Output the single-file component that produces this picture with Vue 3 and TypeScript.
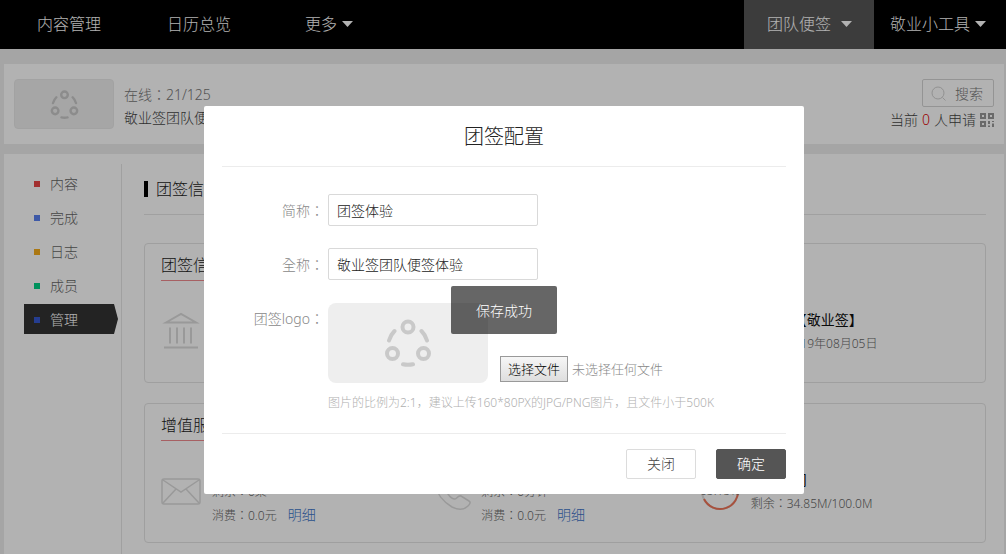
<script setup lang="ts">
import { ref } from 'vue'

interface SideItem {
  label: string
  tone: string
}

const sideItems: SideItem[] = [
  { label: '内容', tone: 'red' },
  { label: '完成', tone: 'blue' },
  { label: '日志', tone: 'amber' },
  { label: '成员', tone: 'green' },
  { label: '管理', tone: 'navy' },
]
const activeItem = ref('管理')
const shortName = ref('团签体验')
const fullName = ref('敬业签团队便签体验')
const fileName = ref('未选择任何文件')
const fileInput = ref<HTMLInputElement | null>(null)
const dialogOpen = ref(true)

function onFile(event: Event) {
  const file = (event.target as HTMLInputElement).files?.[0]
  fileName.value = file ? file.name : '未选择任何文件'
}
</script>

<template>
  <div class="page">
    <nav class="topbar">
      <a class="nav-link" href="#">内容管理</a>
      <a class="nav-link" href="#">日历总览</a>
      <a class="nav-link" href="#">更多
        <svg class="caret" viewBox="0 0 11 6"><path d="M0 0h11L5.500 6z" /></svg>
      </a>
      <span class="spacer"></span>
      <a class="nav-tab current" href="#">团队便签
        <svg class="caret wide" viewBox="0 0 11 6"><path d="M0 0h11L5.500 6z" /></svg>
      </a>
      <a class="nav-tab" href="#">敬业小工具
        <svg class="caret" viewBox="0 0 11 6"><path d="M0 0h11L5.500 6z" /></svg>
      </a>
    </nav>

    <header class="team panel">
      <div class="team-logo">
        <svg viewBox="0 0 48 48" class="share-icon">
          <circle cx="24" cy="8" r="5.500" /><circle cx="8.500" cy="34.500" r="5.500" /><circle cx="39.500" cy="34.500" r="5.500" />
          <path d="M10.500 12Q6.500 16 5 21.500M37.500 12Q41.500 16 43 21.500M19 45.300Q24 46.300 29 45.300" />
        </svg>
      </div>
      <div class="team-info">
        <p class="online">在线：21/125</p>
        <p class="team-name">敬业签团队便签体验</p>
      </div>
      <div class="team-tools">
        <button class="search" type="button">
          <svg viewBox="0 0 16 16"><circle cx="7" cy="7" r="6" /><path d="M11.500 11.500l3 3" /></svg>搜索
        </button>
        <p class="apply">当前 <em>0</em> 人申请
          <svg viewBox="0 0 14 14">
            <path d="M1 1h4v4H1zM9 1h4v4H9zM1 9h4v4H1z" />
            <path d="M9 8v3M13 8v1M9 12.500v1.500M13 10.500V14" />
          </svg>
        </p>
      </div>
    </header>

    <main class="main panel">
      <aside class="side">
        <a
          v-for="item in sideItems"
          :key="item.label"
          href="#"
          :class="['side-link', item.tone, { active: item.label === activeItem }]"
          @click.prevent="activeItem = item.label"
        >{{ item.label }}</a>
      </aside>
      <div class="content">
        <h1 class="section-title">团签信息</h1>
        <section class="card">
          <h2>团签信息</h2>
          <div class="columns">
            <div class="cell">
              <svg class="cell-icon" viewBox="0 0 40 40">
                <path class="roof" d="M5 11.500L20 3l15 8.500z" />
                <path class="pillars" d="M9 16.500v16M16 16.500v16M23 16.500v16M30 16.500v16" />
                <path class="base" d="M3 36.500h34" />
              </svg>
            </div>
            <div class="cell"></div>
            <div class="cell">
              <span class="cell-icon"></span>
              <div class="cell-text">
                <p class="strong">名称：【敬业签】</p>
                <p>创建：2019年08月05日</p>
              </div>
            </div>
          </div>
        </section>
        <section class="card">
          <h2>增值服务</h2>
          <div class="columns">
            <div class="cell">
              <svg class="cell-icon line" viewBox="0 0 40 40">
                <rect x="1" y="8" width="38" height="25" rx="2" />
                <path d="M2 9l18 12L38 9M2 32l13-14M38 32L25 18" />
              </svg>
              <div class="cell-text">
                <p class="strong">短信</p>
                <p>剩余：0条</p>
                <p>消费：0.0元 <a href="#">明细</a></p>
              </div>
            </div>
            <div class="cell">
              <svg class="cell-icon line" viewBox="0 0 40 40">
                <path d="M12 4l6 8c1 2 0 3-2 5-1 1 0 3 2 6s5 5 7 5 3-4 6-3l8 5c2 1 1 3-1 5-4 4-10 4-16 1C14 31 7 24 6 15 5 9 8 5 10 3z" />
              </svg>
              <div class="cell-text">
                <p class="strong">电话</p>
                <p>剩余：0分钟</p>
                <p>消费：0.0元 <a href="#">明细</a></p>
              </div>
            </div>
            <div class="cell">
              <svg class="cell-icon gauge" viewBox="0 0 40 40">
                <circle class="track" cx="20" cy="20" r="18" />
                <path class="value" d="M20 2A18 18 0 1 1 4 28" />
                <text x="20" y="24">65.15%</text>
              </svg>
              <div class="cell-text">
                <p class="strong">存储空间</p>
                <p>剩余：34.85M/100.0M</p>
              </div>
            </div>
          </div>
        </section>
      </div>
    </main>

    <div v-if="dialogOpen" class="overlay">
      <form class="dialog" role="dialog" aria-labelledby="dialog-title" @submit.prevent>
        <h2 id="dialog-title">团签配置</h2>
        <div class="fields">
          <div class="row">
            <label for="short">简称：</label>
            <input id="short" v-model="shortName" type="text" />
          </div>
          <div class="row">
            <label for="full">全称：</label>
            <input id="full" v-model="fullName" type="text" />
          </div>
          <div class="row logo-row">
            <label for="logo">团签logo：</label>
            <div>
              <div class="upload">
                <div class="preview">
                  <svg viewBox="0 0 48 48" class="share-icon">
                    <circle cx="24" cy="8" r="5.500" /><circle cx="8.500" cy="34.500" r="5.500" /><circle cx="39.500" cy="34.500" r="5.500" />
                    <path d="M10.500 12Q6.500 16 5 21.500M37.500 12Q41.500 16 43 21.500M19 45.300Q24 46.300 29 45.300" />
                  </svg>
                </div>
                <input id="logo" ref="fileInput" class="file" type="file" accept="image/png,image/jpeg" @change="onFile" />
                <button class="pick" type="button" @click="fileInput?.click()">选择文件</button>
                <span class="file-name">{{ fileName }}</span>
              </div>
              <p class="hint">图片的比例为2:1，建议上传160*80PX的JPG/PNG图片，且文件小于500K</p>
            </div>
          </div>
        </div>
        <footer>
          <button class="btn" type="button" @click="dialogOpen = false">关闭</button>
          <button class="btn primary" type="submit">确定</button>
        </footer>
        <div class="toast" role="status">保存成功</div>
      </form>
    </div>
  </div>
</template>

<style>
body {
  background: #ececec;
  overflow: hidden;
}
</style>

<style scoped>
.page {
  font: 300 14px/20px "Noto Sans", "Noto Sans CJK TC", "Noto Sans CJK SC", sans-serif;
  color: #444;
  text-spacing-trim: space-all;
}
.page *,
.page *::before {
  box-sizing: border-box;
}
p, h1, h2 {
  margin: 0;
  font-weight: 300;
}
a {
  text-decoration: none;
}
button, input {
  font: inherit;
}
svg {
  fill: none;
  stroke: currentColor;
}

.topbar {
  display: flex;
  height: 49px;
  padding-left: 37px;
  background: #000;
  font-size: 16px;
}
.topbar a {
  display: flex;
  align-items: center;
  gap: 5px;
  padding-bottom: 1px;
  color: #fff;
}
.nav-link {
  margin-right: 66px;
}
.nav-link + .nav-link + .nav-link {
  margin-left: 8px;
}
.spacer {
  flex: 1;
}
.topbar .nav-tab {
  padding: 0 20px 1px 16px;
}
.topbar .nav-tab.current {
  padding: 0 22px 1px 23px;
  background: #575757;
}
.caret {
  width: 11px;
  height: 6px;
  fill: #fff;
  stroke: none;
}
.caret.wide {
  margin-left: 5px;
}

.panel {
  margin: 0 2px 0 4px;
  background: #fff;
}
.team {
  display: flex;
  height: 80px;
  margin-top: 15px;
  padding: 15px 10px 0;
}
.team-logo {
  display: flex;
  align-items: center;
  justify-content: center;
  width: 100px;
  height: 50px;
  border: 1px solid #e9e9e9;
  border-radius: 4px;
  background: #eee;
}
.share-icon {
  width: 48px;
  height: 48px;
  color: #c9c9c9;
  stroke-width: 4;
  stroke-linecap: round;
}
.team-logo .share-icon {
  width: 29px;
  height: 29px;
}
.team-info {
  flex: 1;
  padding: 6px 10px 0;
}
.online {
  margin-bottom: 3px;
  color: #777;
}
.team-tools {
  display: flex;
  flex-direction: column;
  align-items: flex-end;
}
.search {
  display: flex;
  align-items: center;
  gap: 8px;
  width: 72px;
  height: 28px;
  padding: 1px 8px 0;
  border: 1px solid #d5d5d5;
  border-radius: 2px;
  background: transparent;
  color: #777;
  white-space: nowrap;
}
.search svg {
  flex: none;
  width: 16px;
  height: 16px;
  color: #d0d0d0;
}
.apply {
  display: flex;
  align-items: center;
  gap: 4px;
  margin-top: 3px;
}
.apply em {
  color: #d00;
  font-style: normal;
}
.apply svg {
  width: 14px;
  height: 14px;
  color: #999;
  stroke-width: 2;
}

.main {
  display: flex;
  min-height: calc(100vh - 154px);
  margin-top: 10px;
  padding: 10px 18px 0 20px;
}
.side {
  display: flex;
  flex-direction: column;
  gap: 4px;
  width: 98px;
  padding-top: 4px;
  border-right: 1px solid #e6e6e6;
}
.side-link {
  display: flex;
  align-items: center;
  gap: 10px;
  width: 94px;
  height: 30px;
  padding: 2px 0 0 10px;
  color: #666;
}
.side-link::before {
  content: "";
  width: 6px;
  height: 6px;
  background: currentColor;
}
.side-link.red::before { background: #e84545; }
.side-link.blue::before { background: #5a80f0; }
.side-link.amber::before { background: #f5ad1c; }
.side-link.green::before { background: #00d084; }
.side-link.navy::before { background: #3558cf; }
.side-link.active {
  background: #333;
  color: #fff;
  clip-path: polygon(0 0, 90px 0, 100% 50%, 90px 100%, 0 100%);
}
.content {
  flex: 1;
  padding: 0 0 11px 22px;
}
.section-title {
  display: flex;
  align-items: center;
  gap: 8px;
  height: 51px;
  border-bottom: 1px solid #e6e6e6;
  color: #222;
  font-size: 16px;
}
.section-title::before {
  content: "";
  width: 4px;
  height: 16px;
  background: #000;
}
.card {
  height: 140px;
  margin-top: 20px;
  padding: 9px 16px 0;
  border: 1px solid #e4e4e4;
  border-radius: 4px;
}
.section-title + .card {
  margin-top: 28px;
}
.card h2 {
  width: 64px;
  height: 28px;
  border-bottom: 1px solid #f08a8f;
  color: #222;
  font-size: 16px;
  line-height: 24px;
}
.columns {
  display: grid;
  grid-template-columns: repeat(3, 1fr);
  height: 100px;
}
.cell {
  display: flex;
  align-items: center;
  gap: 11px;
}
.cell-icon {
  flex: none;
  width: 40px;
  height: 40px;
  overflow: visible;
  color: #dcdcdc;
  stroke-width: 2;
}
.line {
  stroke-width: 1.500;
}
.cell-text {
  padding-top: 2px;
  color: #666;
  font-size: 12px;
  line-height: 24px;
}
.strong {
  color: #111;
  font-size: 14px;
  font-weight: 400;
}
.cell-text a {
  margin-left: 8px;
  color: #3c74c8;
  font-size: 14px;
  line-height: 20px;
}
.track { color: #e0e0e0; }
.value { color: #f07458; }
.gauge text {
  fill: #777;
  stroke: none;
  font-size: 12px;
  text-anchor: middle;
}

.overlay {
  position: fixed;
  inset: 0;
  padding: 106px 2px 0 4px;
  background: rgba(0, 0, 0, 0.3);
}
.dialog {
  position: relative;
  width: 600px;
  max-width: 100%;
  margin: 0 auto;
  padding: 0 18px 15px;
  border-radius: 2px;
  background: #fff;
}
.dialog h2 {
  height: 61px;
  border-bottom: 1px solid #ececec;
  color: #222;
  font-size: 20px;
  line-height: 62px;
  text-align: center;
}
.fields {
  display: flex;
  flex-direction: column;
  gap: 22px;
  padding: 27px 0 20px;
}
.row {
  display: flex;
  gap: 4px;
}
.row label {
  width: 102px;
  color: #888;
  line-height: 34px;
  height: 32px;
  text-align: right;
}
.row input[type="text"] {
  width: 210px;
  height: 32px;
  padding: 0 8px;
  border: 1px solid #d9d9d9;
  border-radius: 2px;
  background: #fff;
  color: #222;
}
.upload {
  display: flex;
  align-items: flex-end;
  padding-top: 1px;
}
.preview {
  display: flex;
  align-items: center;
  justify-content: center;
  width: 160px;
  height: 80px;
  margin-right: 12px;
  border-radius: 8px;
  background: #eee;
}
.file {
  position: absolute;
  width: 1px;
  height: 1px;
  opacity: 0;
  pointer-events: none;
}
.pick {
  width: 68px;
  height: 26px;
  margin-bottom: 1px;
  padding: 0;
  border: 1px solid #999;
  background: linear-gradient(#f6f6f6, #dedede);
  color: #000;
  font-size: 13px;
}
.file-name {
  margin: 0 0 4px 4px;
  color: #888;
  font-size: 13px;
}
.hint {
  margin-top: 10px;
  color: #b0b0b0;
  font-family: "Noto Sans", "Noto Sans CJK SC", sans-serif;
  font-size: 12px;
  white-space: nowrap;
}
footer {
  display: flex;
  justify-content: flex-end;
  gap: 20px;
  padding-top: 15px;
  border-top: 1px solid #ececec;
}
.btn {
  width: 70px;
  height: 30px;
  padding: 0;
  border: 1px solid #dcdcdc;
  border-radius: 2px;
  background: #fff;
  color: #444;
}
.btn.primary {
  border-color: #555;
  background: #555;
  color: #fff;
}
.toast {
  position: absolute;
  top: 180px;
  left: 50%;
  height: 48px;
  padding: 0 25px;
  border-radius: 2px;
  background: rgba(0, 0, 0, 0.6);
  color: #fff;
  line-height: 50px;
  white-space: nowrap;
  transform: translateX(-50%);
}
</style>
